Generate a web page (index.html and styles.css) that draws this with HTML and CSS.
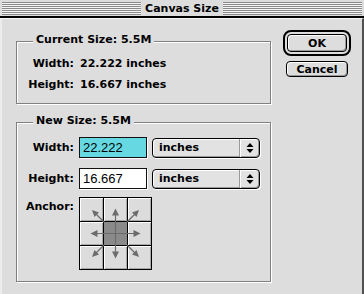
FILE: index.html
```html
<!DOCTYPE html>
<html lang="en">
<head>
  <meta charset="UTF-8">
  <title>Canvas Size</title>
  <link rel="stylesheet" href="styles.css">
</head>
<body>
  <div class="window">
    <div class="titlebar">
      <div class="stripes"><span class="title">Canvas Size</span></div>
    </div>

    <div class="content">
      <div class="groups">
        <fieldset class="group current">
          <legend>Current Size: 5.5M</legend>
          <div class="info-row"><span class="lbl">Width:</span><span>22.222 inches</span></div>
          <div class="info-row"><span class="lbl">Height:</span><span>16.667 inches</span></div>
        </fieldset>

        <fieldset class="group new">
          <legend>New Size: 5.5M</legend>
          <div class="field-grid">
            <label class="lbl" for="w">Width:</label>
            <input id="w" class="num selected" type="text" value="22.222">
            <div class="popup"><span>inches</span><span class="popup-arrow"><svg width="8" height="10" viewBox="0 0 8 10"><path d="M4 0L7.5 4H0.5Z M4 10L7.5 6H0.5Z" fill="#000"/></svg></span></div>

            <label class="lbl" for="h">Height:</label>
            <input id="h" class="num" type="text" value="16.667">
            <div class="popup"><span>inches</span><span class="popup-arrow"><svg width="8" height="10" viewBox="0 0 8 10"><path d="M4 0L7.5 4H0.5Z M4 10L7.5 6H0.5Z" fill="#000"/></svg></span></div>

            <span class="lbl anchor-lbl">Anchor:</span>
            <div class="anchor">
              <div class="cell"></div><div class="cell"></div><div class="cell"></div>
              <div class="cell"></div><div class="cell on"></div><div class="cell"></div>
              <div class="cell"></div><div class="cell"></div><div class="cell"></div>
              <svg class="arrows" width="73" height="73" viewBox="0 0 73 73">
                <g stroke="#6c6c6c" stroke-width="1.2" fill="none">
                  <path d="M36.5 17V56 M17 36.5H56 M25 25L17 17 M48 25L56 17 M25 48L17 56 M48 48L56 56"/>
                </g>
                <g fill="#6c6c6c">
                  <path d="M36.5 11.5L40 18.5H33Z"/>
                  <path d="M36.5 61.5L40 54.5H33Z"/>
                  <path d="M11.5 36.5L18.5 33V40Z"/>
                  <path d="M61.5 36.5L54.5 33V40Z"/>
                  <path d="M13 13L20 15.5L15.5 20Z"/>
                  <path d="M60 13L57.5 20L53 15.5Z"/>
                  <path d="M13 60L15.5 53L20 57.5Z"/>
                  <path d="M60 60L53 57.5L57.5 53Z"/>
                </g>
              </svg>
            </div>
          </div>
        </fieldset>
      </div>

      <div class="buttons">
        <div class="default-ring"><button class="btn">OK</button></div>
        <button class="btn cancel">Cancel</button>
      </div>
    </div>
  </div>
</body>
</html>
```

FILE: styles.css
```css
* {
  box-sizing: border-box;
}
body {
  margin: 0;
  background-color: #dddddd;
  font-family: "DejaVu Sans", sans-serif;
  font-size: 11px;
  font-weight: bold;
  color: #000;
}
.window {
  width: 364px;
  height: 294px;
  display: flex;
  flex-direction: column;
  background-color: #dddddd;
}
.titlebar {
  height: 18px;
  padding: 2px 2px 1px;
  border-bottom: 2px solid #000;
}
.stripes {
  height: 13px;
  display: flex;
  justify-content: center;
  background: repeating-linear-gradient(to bottom, #8a8a8a 0 1px, #f4f4f4 1px 2px);
}
.title {
  padding: 0 4px;
  line-height: 13px;
  background-color: #dddddd;
}
.content {
  flex: 1;
  display: flex;
  border-top: 1px solid #f4f4f4;
  border-left: 2px solid #ececec;
  border-right: 2px solid #505050;
  padding-left: 14px;
}
.groups {
  width: 255px;
  margin-top: 14px;
}
.group {
  width: 255px;
  min-width: 0;
  margin: 0;
  border: 1px solid #808080;
  box-shadow: 1px 1px 0 #fff, inset 1px 1px 0 #fff;
}
.group legend {
  margin-left: 16px;
  padding: 0 3px 3px;
  line-height: 14px;
  background-color: #dddddd;
}
.current {
  padding: 3px 0 8px;
}
.info-row {
  display: flex;
  line-height: 21px;
}
.info-row .lbl {
  width: 57px;
  margin-right: 6px;
  text-align: right;
}
.new {
  margin-top: 10px;
  padding: 6px 0 11px;
}
.field-grid {
  display: grid;
  grid-template-columns: 57px 68px 108px;
  column-gap: 5px;
  row-gap: 10px;
  align-items: center;
}
.field-grid .lbl {
  text-align: right;
  line-height: 21px;
}
.num {
  height: 21px;
  width: 68px;
  margin: 0;
  padding: 0 0 0 3px;
  border: 1px solid #111;
  background-color: #fff;
  box-shadow: 1px 1px 0 #fff;
  font-family: "Liberation Sans", sans-serif;
  font-size: 13px;
  font-weight: normal;
  color: #000;
  outline: none;
}
.num.selected {
  background-color: #66d8e1;
}
.popup {
  height: 20px;
  display: flex;
  align-items: center;
  border: 1px solid #000;
  border-radius: 4px;
  background-color: #e2e2e2;
  box-shadow: inset 1px 1px 0 #fff, inset -1px -1px 0 #9a9a9a, 1px 1px 0 #fff;
}
.popup span:first-child {
  flex: 1;
  padding-left: 6px;
}
.popup-arrow {
  width: 20px;
  height: 18px;
  display: flex;
  align-items: center;
  justify-content: center;
  border-left: 1px solid #9a9a9a;
  box-shadow: inset 1px 0 0 #fff;
}
.anchor-lbl {
  align-self: start;
  line-height: 16px !important;
}
.field-grid .anchor {
  margin-top: -2px;
}
.anchor {
  position: relative;
  width: 73px;
  height: 73px;
  display: grid;
  grid-template-columns: repeat(3, 23px);
  grid-template-rows: repeat(3, 23px);
  gap: 1px;
  padding: 1px;
  background-color: #000;
}
.cell {
  background-color: #dcdcdc;
  box-shadow: inset 1px 1px 0 #fff, inset -1px -1px 0 #a8a8a8;
}
.cell.on {
  background-color: #8a8a8a;
  box-shadow: none;
}
.arrows {
  position: absolute;
  left: 0;
  top: 0;
}
.buttons {
  margin-left: 12px;
  padding-top: 11px;
  width: 68px;
}
.default-ring {
  width: 68px;
  height: 26px;
  padding: 2px;
  border: 2px solid #000;
  border-radius: 8px;
  background-color: #dddddd;
}
.btn {
  display: block;
  width: 100%;
  height: 18px;
  margin: 0;
  padding: 0;
  border: 1px solid #000;
  border-radius: 4px;
  background-color: #dddddd;
  box-shadow: inset 1px 1px 0 #fff, inset -1px -1px 0 #999;
  font: inherit;
  color: #000;
}
.cancel {
  width: 62px;
  height: 16px;
  margin: 5px 3px 0;
  line-height: 13px;
}
```
